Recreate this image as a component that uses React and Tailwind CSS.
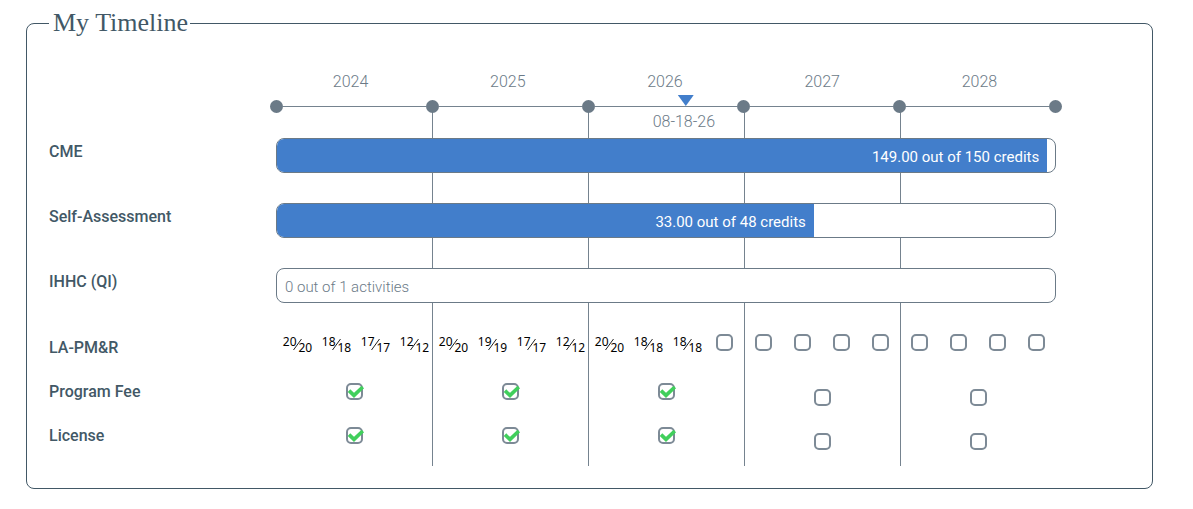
import React from "react";

const years = [2024, 2025, 2026, 2027, 2028];

const bars = [
  { label: "CME", earned: 149, text: "149.00 out of 150 credits", total: 150 },
  {
    label: "Self-Assessment",
    earned: 33,
    text: "33.00 out of 48 credits",
    total: 48,
  },
  { label: "IHHC (QI)", earned: 0, text: "0 out of 1 activities", total: 1 },
];

// one list per year, one entry per quarter, null = not taken yet
const quarters = [
  [20, 18, 17, 12],
  [20, 19, 17, 12],
  [20, 18, 18, null],
  [null, null, null, null],
  [null, null, null, null],
];

const yearly = [
  { label: "Program Fee", done: [true, true, true, false, false] },
  { label: "License", done: [true, true, true, false, false] },
];

// 08-18-26 as a share of the five years
const todayPosition = ((2 + 229 / 365) / 5) * 100;

const Checkbox = ({ label, checked = false }) => (
  <span className="grid w-[17px] h-[17px]">
    <input
      type="checkbox"
      aria-label={label}
      checked={checked}
      readOnly
      className="col-start-1 row-start-1 appearance-none w-[17px] h-[17px] rounded-[5px] border-2 border-[#7d8a96] bg-white"
    />
    {checked && (
      <svg
        viewBox="0 0 17 17"
        className="col-start-1 row-start-1 w-[17px] h-[17px] overflow-visible pointer-events-none"
      >
        <path
          d="M3 7.6 L8 12.4 L16.8 4"
          fill="none"
          stroke="#41cf5c"
          strokeWidth="3.6"
        />
      </svg>
    )}
  </span>
);

const Fraction = ({ value }) => (
  <span className="flex pl-1 pt-0.5 font-['Noto_Sans',sans-serif] text-xs leading-3 text-black">
    <span>{value}</span>
    <svg viewBox="0 0 2 16" className="w-0.5 h-4 overflow-visible">
      <path d="M-3.5 14 L4.5 3" stroke="#222" strokeWidth="1" />
    </svg>
    <span className="pt-1.5">{value}</span>
  </span>
);

const RowLabel = ({ children }) => (
  <h2 className="w-[227px] shrink-0 pt-0.5 font-medium text-[#425866]">
    {children}
  </h2>
);

const Bar = ({ bar }) => {
  const percent = Math.round((bar.earned / bar.total) * 100);

  return (
    <div className="flex-1 h-[35px] rounded-lg border border-[#6b7a87] bg-white text-[15px] leading-6 overflow-hidden">
      {percent > 0 ? (
        <div
          className="h-full bg-[#427ecb] text-white text-right pr-2 pt-1.5 whitespace-nowrap"
          style={{ width: `${percent}%` }}
        >
          {bar.text}
        </div>
      ) : (
        <div className="pl-2 pt-1.5 text-[#6b7a87] font-light">{bar.text}</div>
      )}
    </div>
  );
};

const Axis = () => (
  <div className="relative h-[38px]">
    <div className="flex items-center -mx-1.5">
      {years.map((year) => (
        <React.Fragment key={year}>
          <span className="w-[13px] h-[13px] rounded-full bg-[#6b7a87]" />
          <span className="flex-1 h-px bg-[#75838f]" />
        </React.Fragment>
      ))}
      <span className="w-[13px] h-[13px] rounded-full bg-[#6b7a87]" />
    </div>
    <div
      className="absolute -top-[5px] flex flex-col items-center -translate-x-1/2 font-light text-[#6b7a87]"
      style={{ left: `${todayPosition}%` }}
    >
      <svg viewBox="0 0 16 11" className="w-4 h-[11px]">
        <path d="M0 0 H16 L8 11 Z" fill="#427ecb" />
      </svg>
      <span className="leading-8 h-6 pr-1 whitespace-nowrap">08-18-26</span>
    </div>
  </div>
);

const App = () => {
  return (
    <main className="bg-white pt-[5px] pb-5 pl-[26px] pr-10 font-[Roboto,sans-serif] text-base">
      <fieldset className="rounded-lg border border-[#425866] pl-[22px] pr-24 pb-[22px]">
        <legend className="pl-1 pr-0.5 font-['Liberation_Serif',serif] text-[26px] leading-9 text-[#425866]">
          My Timeline
        </legend>

        <div className="grid pt-7">
          {/* Year separators, drawn behind the rows */}
          <div className="col-start-1 row-start-1 grid grid-cols-5 pl-[227px] pt-[37px]">
            {years.map((year, index) => (
              <div
                key={year}
                className={index > 0 ? "border-l border-[#75838f]" : ""}
              />
            ))}
          </div>

          <div className="col-start-1 row-start-1">
            <div className="ml-[227px]">
              <div className="grid grid-cols-5 -ml-1 -mr-0.5 h-[31px] leading-[26px] text-center font-light text-[#6b7a87]">
                {years.map((year) => (
                  <span key={year}>{year}</span>
                ))}
              </div>
              <Axis />
            </div>

            <div className="pb-px">
              {bars.map((bar) => (
                <div key={bar.label} className="flex h-[65px]">
                  <RowLabel>{bar.label}</RowLabel>
                  <Bar bar={bar} />
                </div>
              ))}
            </div>

            <div className="flex h-11">
              <RowLabel>LA-PM&amp;R</RowLabel>
              <div className="flex-1 grid grid-cols-5">
                {quarters.map((scores, index) => (
                  <div
                    key={years[index]}
                    className="grid grid-cols-4 justify-items-center items-start"
                  >
                    {scores.map((score, quarter) =>
                      score ? (
                        <Fraction key={quarter} value={score} />
                      ) : (
                        <Checkbox
                          key={quarter}
                          label={`LA-PM&R ${years[index]} quarter ${quarter + 1}`}
                        />
                      )
                    )}
                  </div>
                ))}
              </div>
            </div>

            {yearly.map((row) => (
              <div key={row.label} className="flex h-11">
                <RowLabel>{row.label}</RowLabel>
                <div className="flex-1 grid grid-cols-5 justify-items-center">
                  {row.done.map((done, index) => (
                    <div
                      key={years[index]}
                      className={done ? "pt-[5px]" : "pt-[11px]"}
                    >
                      <Checkbox
                        label={`${row.label} ${years[index]}`}
                        checked={done}
                      />
                    </div>
                  ))}
                </div>
              </div>
            ))}
          </div>
        </div>
      </fieldset>
    </main>
  );
};

export default App;
